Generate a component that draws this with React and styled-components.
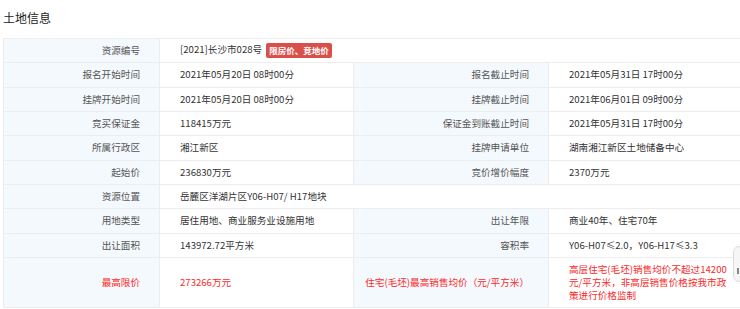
import React from "react";
import styled, { createGlobalStyle } from "styled-components";

const Global = createGlobalStyle`
  html, body { margin: 0; padding: 0; background: #fff; overflow: hidden; }
  body { font-family: "Noto Sans CJK SC", "Liberation Sans", sans-serif; }
`;

const Page = styled.div`
  padding: 0 0 0 3px;
  width: 745px;
`;

const Title = styled.h3`
  margin: 0;
  height: 38px;
  line-height: 36px;
  font-size: 12px;
  font-weight: 400;
  color: #222;
`;

const Table = styled.table`
  width: 745px;
  border-collapse: collapse;
  table-layout: fixed;
  font-size: 9.6px;
`;

const Row = styled.tr`
  height: ${(p) => (p.$tall ? "50px" : "24.33px")};
`;

const Label = styled.td`
  background: #f4f9fd;
  border: 1px solid #ededed;
  text-align: right;
  padding: 0 19px 0 10px;
  color: ${(p) => (p.$red ? "#fa2b2b" : "#555")};
  line-height: 13.3px;
`;

const Value = styled.td`
  background: #fff;
  border: 1px solid #ededed;
  text-align: left;
  padding: 0 20px;
  color: ${(p) => (p.$red ? "#fa2b2b" : "#333")};
  line-height: 13.3px;
`;

const Badge = styled.span`
  display: inline-block;
  margin-left: 4px;
  padding: 0 3px;
  height: 15px;
  line-height: 15px;
  background: #da4f4a;
  color: #fff;
  font-weight: 700;
  font-size: 8.5px;
  border-radius: 2px;
  vertical-align: middle;
`;

const SideTab = styled.div`
  position: fixed;
  left: 733px;
  top: 246px;
  width: 22px;
  height: 36px;
  box-sizing: border-box;
  border: 1px solid #dcdcdc;
  border-radius: 6px;
  background: #f6f6f6;
  &::after {
    content: "";
    position: absolute;
    left: 3px;
    top: 21px;
    width: 2px;
    height: 6px;
    background: #888;
  }
`;

const rows = [
  ["报名开始时间", "2021年05月20日 08时00分", "报名截止时间", "2021年05月31日 17时00分"],
  ["挂牌开始时间", "2021年05月20日 08时00分", "挂牌截止时间", "2021年06月01日 09时00分"],
  ["竞买保证金", "118415万元", "保证金到账截止时间", "2021年05月31日 17时00分"],
  ["所属行政区", "湘江新区", "挂牌申请单位", "湖南湘江新区土地储备中心"],
  ["起始价", "236830万元", "竞价增价幅度", "2370万元"],
];

const rows2 = [
  ["用地类型", "居住用地、商业服务业设施用地", "出让年限", "商业40年、住宅70年"],
  ["出让面积", "143972.72平方米", "容积率", "Y06-H07≤2.0，Y06-H17≤3.3"],
];

export default function App() {
  return (
    <Page>
      <Global />
      <Title>土地信息</Title>
      <Table>
        <colgroup>
          <col style={{ width: 156 }} />
          <col style={{ width: 194 }} />
          <col style={{ width: 195 }} />
          <col />
        </colgroup>
        <tbody>
          <Row>
            <Label>资源编号</Label>
            <Value colSpan={3}>
              [2021]长沙市028号<Badge>限房价、竞地价</Badge>
            </Value>
          </Row>
          {rows.map((r) => (
            <Row key={r[0]}>
              <Label>{r[0]}</Label>
              <Value>{r[1]}</Value>
              <Label>{r[2]}</Label>
              <Value>{r[3]}</Value>
            </Row>
          ))}
          <Row>
            <Label>资源位置</Label>
            <Value colSpan={3}>岳麓区洋湖片区Y06-H07/ H17地块</Value>
          </Row>
          {rows2.map((r) => (
            <Row key={r[0]}>
              <Label>{r[0]}</Label>
              <Value>{r[1]}</Value>
              <Label>{r[2]}</Label>
              <Value>{r[3]}</Value>
            </Row>
          ))}
          <Row $tall>
            <Label $red>最高限价</Label>
            <Value $red>273266万元</Value>
            <Label $red>住宅(毛坯)最高销售均价（元/平方米）</Label>
            <Value $red>
              高层住宅(毛坯)销售均价不超过14200元/平方米，非高层销售价格按我市政策进行价格监制
            </Value>
          </Row>
        </tbody>
      </Table>
      <SideTab />
    </Page>
  );
}
